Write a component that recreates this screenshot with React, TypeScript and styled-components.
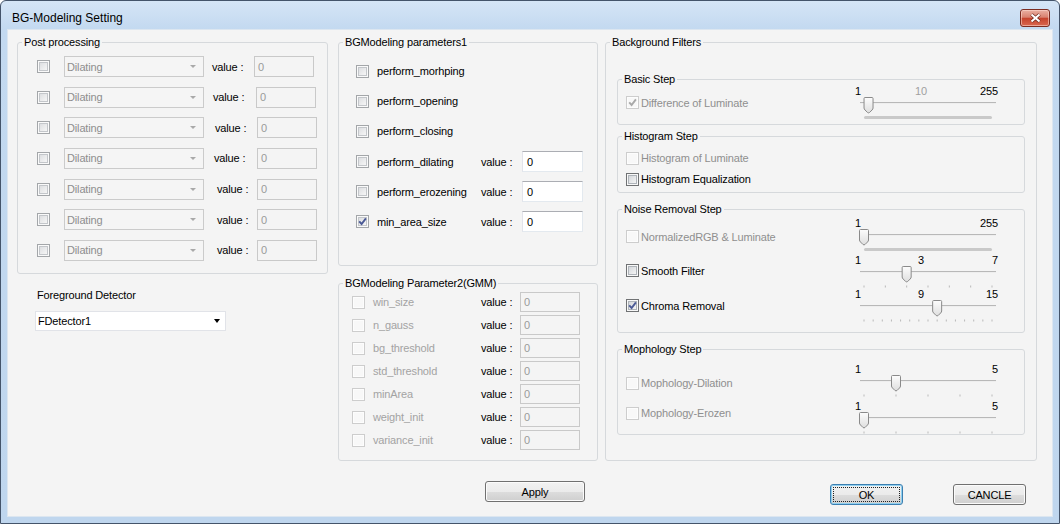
import React, { useId } from "react";
import styled, { createGlobalStyle, css } from "styled-components";

type Tone = "dark" | "mid" | "light";

const GlobalStyle = createGlobalStyle`
  html, body {
    margin: 0;
    padding: 0;
  }
  body {
    font-family: "Liberation Sans", Arial, sans-serif;
    font-size: 11px;
    letter-spacing: -0.15px;
    color: #000;
  }
  *, *::before, *::after {
    box-sizing: border-box;
  }
`;

const Window = styled.div`
  width: 1060px;
  height: 524px;
  display: flex;
  flex-direction: column;
  padding: 0 6px 6px;
  border: 1px solid #44546a;
  border-radius: 6px 6px 0 0;
  background: linear-gradient(to bottom, #d5e5f6 0px, #c3d9f0 28px, #bfd6ee 100%);
  overflow: hidden;
`;

const TitleBar = styled.div`
  height: 28px;
  flex: none;
  display: flex;
  align-items: flex-start;
  justify-content: space-between;
  padding-left: 5px;
`;

const Title = styled.span`
  margin-top: 10px;
  font-size: 12px;
  line-height: 14px;
  letter-spacing: 0;
`;

const CloseButton = styled.div`
  width: 30px;
  height: 18px;
  margin: 8px 3px 0 0;
  display: flex;
  align-items: center;
  justify-content: center;
  border: 1px solid #7b2c21;
  border-radius: 3px;
  background: linear-gradient(to bottom, #eab0a2 0%, #d98270 45%, #c6442d 52%, #d9674f 100%);
  box-shadow: inset 0 0 0 1px rgba(255, 220, 210, 0.55);
`;

const Client = styled.div`
  flex: 1;
  display: flex;
  flex-direction: column;
  background: #f4f4f4;
  border: 1px solid #dce6f0;
`;

const Columns = styled.div`
  display: flex;
  align-items: flex-start;
  padding: 6px 0 0 9px;
`;

const Column = styled.div<{ $w: number; $ml?: number }>`
  width: ${(p) => p.$w}px;
  margin-left: ${(p) => p.$ml ?? 0}px;
  flex: none;
  display: flex;
  flex-direction: column;
`;

const Group = styled.fieldset<{ $h: number; $mt?: number }>`
  margin: ${(p) => p.$mt ?? 0}px 0 0;
  padding: 0;
  min-width: 0;
  height: ${(p) => p.$h}px;
  border: 1px solid #d6d9dc;
  border-radius: 3px;
`;

const SubGroup = styled(Group)`
  margin: ${(p) => p.$mt ?? 0}px 11px 0;
`;

const Legend = styled.legend`
  margin-left: 4px;
  padding: 0 2px;
  font-size: 11px;
  line-height: 13px;
`;

/* ---------- check box ---------- */

const toneStyles = {
  dark: css`
    border-color: #707274;
    background: linear-gradient(135deg, #cbcfd4 0%, #f6f6f6 85%);
    box-shadow: inset 0 0 0 1px #f8f8f8, inset 0 0 0 2px #aeb3b9;
  `,
  mid: css`
    border-color: #a3a6a9;
    background: linear-gradient(135deg, #d6d8db 0%, #f7f7f7 85%);
    box-shadow: inset 0 0 0 1px #fafafa, inset 0 0 0 2px #c3c6ca;
  `,
  light: css`
    border-color: #cdcdcd;
    background: #f8f8f8;
    box-shadow: inset 0 0 0 1px #fdfdfd;
  `,
};

const Box = styled.span<{ $tone: Tone }>`
  width: 13px;
  height: 13px;
  flex: none;
  display: inline-flex;
  align-items: center;
  justify-content: center;
  border: 1px solid;
  ${(p) => toneStyles[p.$tone]}
`;

const Check: React.FC<{ tone: Tone; checked?: boolean }> = ({ tone, checked }) => (
  <Box $tone={tone}>
    {checked && (
      <svg width="9" height="9" viewBox="0 0 9 9">
        <path
          d="M1.2 4.4 L3.6 7 L7.9 1.4"
          fill="none"
          stroke={tone === "light" ? "#a9a9a9" : "#4b5a96"}
          strokeWidth="1.9"
        />
      </svg>
    )}
  </Box>
);

/* ---------- inputs ---------- */

const Combo = styled.div<{ $w: number; $h: number; $active?: boolean }>`
  width: ${(p) => p.$w}px;
  height: ${(p) => p.$h}px;
  flex: none;
  display: flex;
  align-items: center;
  justify-content: space-between;
  padding: 0 5px 0 2px;
  border: 1px solid ${(p) => (p.$active ? "#e1e3e8" : "#cbcbcb")};
  background: ${(p) => (p.$active ? "#fff" : "#f5f5f5")};
  color: ${(p) => (p.$active ? "#000" : "#8e8e8e")};
`;

const Caret = styled.span<{ $active?: boolean }>`
  width: 0;
  height: 0;
  border-left: ${(p) => (p.$active ? 3.5 : 3)}px solid transparent;
  border-right: ${(p) => (p.$active ? 3.5 : 3)}px solid transparent;
  border-top: ${(p) => (p.$active ? 4 : 3)}px solid ${(p) => (p.$active ? "#000" : "#a9a9a9")};
  margin-right: ${(p) => (p.$active ? 0 : 2)}px;
`;

const TextBox = styled.div<{ $w: number; $h: number; $disabled?: boolean }>`
  width: ${(p) => p.$w}px;
  height: ${(p) => p.$h}px;
  flex: none;
  display: flex;
  align-items: center;
  padding-left: ${(p) => (p.$disabled ? 3 : 4)}px;
  border: 1px solid;
  border-color: ${(p) => (p.$disabled ? "#c9c9c9" : "#abadb3 #e3e9ef #e3e9ef #e2e3ea")};
  background: ${(p) => (p.$disabled ? "#f4f4f4" : "#fff")};
  color: ${(p) => (p.$disabled ? "#9a9a9a" : "#000")};
`;

const ValueText = styled.span<{ $ml?: number; $w: number }>`
  margin-left: ${(p) => p.$ml ?? 0}px;
  width: ${(p) => p.$w}px;
  flex: none;
  white-space: nowrap;
`;

/* ---------- post processing ---------- */

const PostBody = styled.div`
  display: flex;
  flex-direction: column;
  gap: 9.67px;
  padding: 7px 0 0 19px;
`;

const PostRow = styled.div`
  height: 21px;
  display: flex;
  align-items: center;
`;

const ComboGap = styled.span`
  width: 14px;
  flex: none;
`;

const FgLabel = styled.div`
  margin: 15px 0 0 20px;
  line-height: 12px;
`;

const FgCombo = styled(Combo)`
  margin: 10px 0 0 18px;
`;

/* ---------- parameter groups ---------- */

const ParamBody = styled.div<{ $pt: number; $pl: number; $gap: number }>`
  display: flex;
  flex-direction: column;
  gap: ${(p) => p.$gap}px;
  padding: ${(p) => p.$pt}px 0 0 ${(p) => p.$pl}px;
`;

const ParamRow = styled.div<{ $h: number }>`
  height: ${(p) => p.$h}px;
  display: flex;
  align-items: center;
`;

const ParamName = styled.span<{ $w: number; $muted?: boolean }>`
  width: ${(p) => p.$w}px;
  margin-left: 8px;
  flex: none;
  color: ${(p) => (p.$muted ? "#a3a3a3" : "#000")};
`;

/* ---------- background filters ---------- */

const CheckItem = styled.div<{ $mt?: number; $muted?: boolean; $h?: number }>`
  margin-top: ${(p) => p.$mt ?? 0}px;
  height: ${(p) => p.$h ?? 13}px;
  display: flex;
  align-items: center;
  gap: 2px;
  padding-left: 8px;
  white-space: nowrap;
  color: ${(p) => (p.$muted ? "#8f8f8f" : "#000")};
`;

const HistBody = styled.div`
  display: flex;
  flex-direction: column;
  gap: 7px;
  padding-top: 8px;
`;

const SliderRow = styled.div<{ $mt?: number }>`
  display: grid;
  grid-template-columns: 237px 143px;
  height: 36px;
  margin-top: ${(p) => p.$mt ?? 0}px;
`;

const SliderBlock = styled.div`
  display: flex;
  flex-direction: column;
`;

const SliderLabels = styled.div`
  display: grid;
  grid-template-columns: 60px 12px 1fr;
  line-height: 12px;
  height: 12px;
`;

const MidLabel = styled.span<{ $muted?: boolean }>`
  text-align: center;
  color: ${(p) => (p.$muted ? "#a0a0a0" : "#000")};
`;

const EndLabel = styled.span`
  text-align: right;
`;

const SX0 = 9;
const SX1 = 137;

const Slider: React.FC<{
  min: number;
  max: number;
  value: number;
  mid?: string;
  midMuted?: boolean;
  ticks: number | "bar";
}> = ({ min, max, value, mid, midMuted, ticks }) => {
  const id = useId().replace(/:/g, "");
  const pos = (v: number) => SX0 + ((v - min) / (max - min)) * (SX1 - SX0);
  const cx = pos(value);
  return (
    <SliderBlock>
      <SliderLabels>
        <span>{min}</span>
        <MidLabel $muted={midMuted}>{mid ?? ""}</MidLabel>
        <EndLabel>{max}</EndLabel>
      </SliderLabels>
      <svg width="143" height="24" viewBox="0 0 143 24">
        <defs>
          <linearGradient id={`g${id}`} x1="0" y1="0" x2="0" y2="1">
            <stop offset="0" stopColor="#fdfdfd" />
            <stop offset="1" stopColor="#dedede" />
          </linearGradient>
        </defs>
        <line x1="5" y1="5.5" x2="141" y2="5.5" stroke="#b8b8b8" />
        <line x1="5" y1="6.5" x2="141" y2="6.5" stroke="#eeeeee" />
        {ticks === "bar" ? (
          <rect x={SX0} y="19" width={SX1 - SX0} height="3" rx="1.5" fill="#c9c9c9" />
        ) : (
          Array.from({ length: ticks }, (_, i) => (
            <rect
              key={i}
              x={pos(min + ((max - min) * i) / (ticks - 1)) - 0.5}
              y="19.5"
              width="1"
              height="2"
              fill="#b9b9b9"
            />
          ))
        )}
        <path
          d={`M${cx - 4.5} 1.5 q0 -1 1 -1 h7 q1 0 1 1 v9.5 q0 1 -1 2 l-2.5 2.5 q-1 .8 -2 0 l-2.5 -2.5 q-1 -1 -1 -2 z`}
          fill={`url(#g${id})`}
          stroke="#8a8a8a"
        />
      </svg>
    </SliderBlock>
  );
};

/* ---------- buttons ---------- */

const Footer = styled.div`
  display: flex;
  align-items: flex-start;
  margin-top: 20px;
  padding-left: 477px;
`;

const Button = styled.div<{ $w: number; $ml?: number; $mt?: number; $focus?: boolean }>`
  position: relative;
  width: ${(p) => p.$w}px;
  height: 21px;
  margin: ${(p) => p.$mt ?? 0}px 0 0 ${(p) => p.$ml ?? 0}px;
  display: flex;
  align-items: center;
  justify-content: center;
  border: 1px solid ${(p) => (p.$focus ? "#3c7fb1" : "#707070")};
  border-radius: 3px;
  background: linear-gradient(to bottom, #f2f2f2 0%, #ebebeb 50%, #dddddd 51%, #cfcfcf 100%);
  box-shadow: inset 0 0 0 1px ${(p) => (p.$focus ? "#8fd0f0" : "#fbfbfb")};
  ${(p) =>
    p.$focus &&
    css`
      &::after {
        content: "";
        position: absolute;
        inset: 2px;
        border: 1px dotted #222;
      }
    `}
`;

/* ---------- data ---------- */

const postRows = [
  { shift: 0, gap: 42 },
  { shift: 1, gap: 43 },
  { shift: 3, gap: 42 },
  { shift: 2, gap: 43 },
  { shift: 5, gap: 40 },
  { shift: 5, gap: 40 },
  { shift: 5, gap: 40 },
];

const params1 = [
  { name: "perform_morhping" },
  { name: "perform_opening" },
  { name: "perform_closing" },
  { name: "perform_dilating", value: "0" },
  { name: "perform_erozening", value: "0" },
  { name: "min_area_size", value: "0", checked: true },
];

const params2 = [
  "win_size",
  "n_gauss",
  "bg_threshold",
  "std_threshold",
  "minArea",
  "weight_init",
  "variance_init",
];

const App: React.FC = () => {
  return (
    <>
      <GlobalStyle />
      <Window>
        <TitleBar>
          <Title>BG-Modeling Setting</Title>
          <CloseButton>
            <svg width="13" height="10" viewBox="0 0 13 10">
              <path d="M2.5 1.5 L10.5 8.5 M10.5 1.5 L2.5 8.5" stroke="#6e2a1f" strokeWidth="3.6" />
              <path d="M2.5 1.5 L10.5 8.5 M10.5 1.5 L2.5 8.5" stroke="#fff" strokeWidth="2.1" />
            </svg>
          </CloseButton>
        </TitleBar>
        <Client>
          <Columns>
            <Column $w={311}>
              <Group $h={238}>
                <Legend>Post processing</Legend>
                <PostBody>
                  {postRows.map((r, i) => (
                    <PostRow key={i}>
                      <Check tone="mid" />
                      <ComboGap />
                      <Combo $w={140} $h={21}>
                        Dilating
                        <Caret />
                      </Combo>
                      <ValueText $ml={8 + r.shift} $w={r.gap}>
                        value :
                      </ValueText>
                      <TextBox $w={60} $h={21} $disabled>
                        0
                      </TextBox>
                    </PostRow>
                  ))}
                </PostBody>
              </Group>
              <FgLabel>Foreground Detector</FgLabel>
              <FgCombo $w={191} $h={20} $active>
                FDetector1
                <Caret $active />
              </FgCombo>
            </Column>

            <Column $w={260} $ml={10}>
              <Group $h={230}>
                <Legend>BGModeling parameters1</Legend>
                <ParamBody $pt={11.5} $pl={17} $gap={9.2}>
                  {params1.map((p) => (
                    <ParamRow key={p.name} $h={21}>
                      <Check tone="mid" checked={p.checked} />
                      <ParamName $w={104}>{p.name}</ParamName>
                      {p.value !== undefined && (
                        <>
                          <ValueText $w={41}>value :</ValueText>
                          <TextBox $w={61} $h={21}>
                            {p.value}
                          </TextBox>
                        </>
                      )}
                    </ParamRow>
                  ))}
                </ParamBody>
              </Group>
              <Group $h={184} $mt={11}>
                <Legend>BGModeling Parameter2(GMM)</Legend>
                <ParamBody $pt={2} $pl={13} $gap={3}>
                  {params2.map((name) => (
                    <ParamRow key={name} $h={20}>
                      <Check tone="light" />
                      <ParamName $w={108} $muted>
                        {name}
                      </ParamName>
                      <ValueText $w={39}>value :</ValueText>
                      <TextBox $w={60} $h={20} $disabled>
                        0
                      </TextBox>
                    </ParamRow>
                  ))}
                </ParamBody>
              </Group>
            </Column>

            <Column $w={432} $ml={7}>
              <Group $h={425}>
                <Legend>Background Filters</Legend>

                <SubGroup $h={52} $mt={24}>
                  <Legend>Basic Step</Legend>
                  <SliderRow $mt={-1}>
                    <CheckItem $mt={11} $muted>
                      <Check tone="light" checked />
                      Difference of Luminate
                    </CheckItem>
                    <Slider min={1} max={255} value={10} mid="10" midMuted ticks="bar" />
                  </SliderRow>
                </SubGroup>

                <SubGroup $h={63} $mt={5}>
                  <Legend>Histogram Step</Legend>
                  <HistBody>
                    <CheckItem $h={14} $muted>
                      <Check tone="light" />
                      Histogram of Luminate
                    </CheckItem>
                    <CheckItem $h={14}>
                      <Check tone="dark" />
                      Histogram Equalization
                    </CheckItem>
                  </HistBody>
                </SubGroup>

                <SubGroup $h={130} $mt={10}>
                  <Legend>Noise Removal Step</Legend>
                  <SliderRow $mt={1}>
                    <CheckItem $mt={13} $muted>
                      <Check tone="light" />
                      NormalizedRGB &amp; Luminate
                    </CheckItem>
                    <Slider min={1} max={255} value={1} ticks="bar" />
                  </SliderRow>
                  <SliderRow $mt={1}>
                    <CheckItem $mt={10}>
                      <Check tone="dark" />
                      Smooth Filter
                    </CheckItem>
                    <Slider min={1} max={7} value={3} mid="3" ticks={7} />
                  </SliderRow>
                  <SliderRow $mt={-2}>
                    <CheckItem $mt={11}>
                      <Check tone="dark" checked />
                      Chroma Removal
                    </CheckItem>
                    <Slider min={1} max={15} value={9} mid="9" ticks={15} />
                  </SliderRow>
                </SubGroup>

                <SubGroup $h={92} $mt={10}>
                  <Legend>Mophology Step</Legend>
                  <SliderRow $mt={6.5}>
                    <CheckItem $mt={14} $muted>
                      <Check tone="light" />
                      Mophology-Dilation
                    </CheckItem>
                    <Slider min={1} max={5} value={2} ticks={5} />
                  </SliderRow>
                  <SliderRow $mt={1}>
                    <CheckItem $mt={7} $muted>
                      <Check tone="light" />
                      Mophology-Erozen
                    </CheckItem>
                    <Slider min={1} max={5} value={1} ticks={5} />
                  </SliderRow>
                </SubGroup>
              </Group>
            </Column>
          </Columns>

          <Footer>
            <Button $w={100}>Apply</Button>
            <Button $w={73} $ml={245} $mt={3} $focus>
              OK
            </Button>
            <Button $w={73} $ml={50} $mt={3}>
              CANCLE
            </Button>
          </Footer>
        </Client>
      </Window>
    </>
  );
};

export default App;
